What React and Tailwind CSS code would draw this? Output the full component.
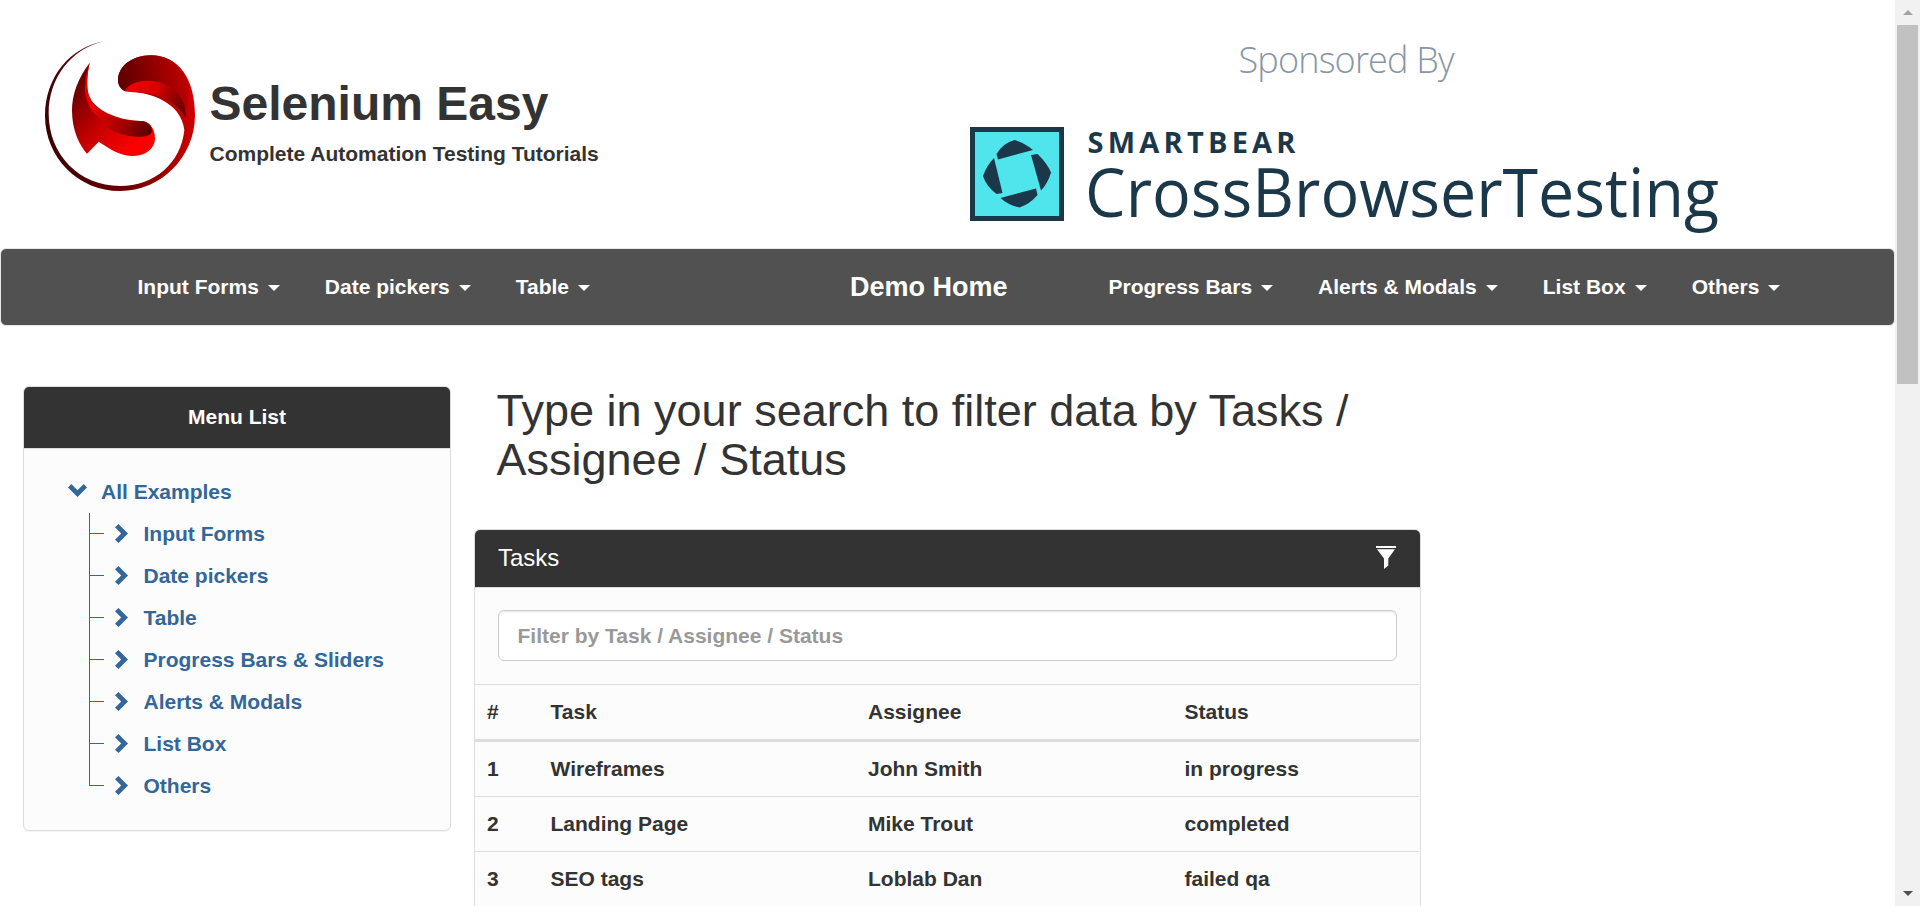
const leftNav = ["Input Forms", "Date pickers", "Table"];
const rightNav = ["Progress Bars", "Alerts & Modals", "List Box", "Others"];
const examples = [
  "Input Forms",
  "Date pickers",
  "Table",
  "Progress Bars & Sliders",
  "Alerts & Modals",
  "List Box",
  "Others",
];
const tasks = [
  ["1", "Wireframes", "John Smith", "in progress"],
  ["2", "Landing Page", "Mike Trout", "completed"],
  ["3", "SEO tags", "Loblab Dan", "failed qa"],
];

function SeleniumLogo() {
  return (
    <svg viewBox="27 33 450 450" className="h-[150px] w-[150px] shrink-0">
      <defs>
        <linearGradient id="ring" gradientUnits="userSpaceOnUse" x1="27" y1="300" x2="477" y2="200">
          <stop offset="0" stopColor="#3a0204" />
          <stop offset="0.45" stopColor="#6d0003" />
          <stop offset="0.75" stopColor="#a80000" />
          <stop offset="1" stopColor="#d60000" />
        </linearGradient>
        <linearGradient id="cap" gradientUnits="userSpaceOnUse" x1="265" y1="150" x2="440" y2="110">
          <stop offset="0" stopColor="#620000" />
          <stop offset="1" stopColor="#bc0000" />
        </linearGradient>
        <linearGradient id="fold" gradientUnits="userSpaceOnUse" x1="290" y1="160" x2="445" y2="240">
          <stop offset="0" stopColor="#ee0000" />
          <stop offset="0.4" stopColor="#d80000" />
          <stop offset="1" stopColor="#640000" />
        </linearGradient>
        <linearGradient id="body" gradientUnits="userSpaceOnUse" x1="110" y1="200" x2="290" y2="350">
          <stop offset="0" stopColor="#700000" />
          <stop offset="0.5" stopColor="#c60000" />
          <stop offset="1" stopColor="#fb0000" />
        </linearGradient>
        <linearGradient id="shade" gradientUnits="userSpaceOnUse" x1="180" y1="240" x2="340" y2="310">
          <stop offset="0" stopColor="#e00000" />
          <stop offset="0.5" stopColor="#a60000" />
          <stop offset="1" stopColor="#580000" />
        </linearGradient>
      </defs>
      <path
        fill="url(#ring)"
        d="M205 34C105 50 27 140 27 257C27 382 127 483 252 483C377 483 477 380 477 255C477 150 430 76 345 76C285 76 246 112 246 150C246 166 255 178 268 184C340 186 435 215 445 300C435 400 355 468 252 468C130 468 38 375 38 250C38 145 105 55 205 34Z"
      />
      <path
        fill="url(#cap)"
        d="M268 184C255 178 246 166 246 150C246 112 285 76 345 76C400 76 440 110 460 165L448 262C430 190 370 150 320 152C290 154 272 168 268 184Z"
      />
      <path fill="url(#fold)" d="M266 183C280 160 312 149 350 153C410 162 452 198 449 266C425 212 355 186 290 187Z" />
      <path
        fill="url(#body)"
        d="M161 98C125 145 108 195 108 242C108 300 130 345 153 371L188 335C220 355 250 378 292 378C335 378 357 350 357 325C357 295 340 273 315 273C240 270 175 240 158 195C150 165 154 130 161 98Z"
      />
      <path fill="#ea0000" d="M161 98C145 145 141 190 158 225C166 243 176 254 190 262C205 272 215 262 212 254C180 237 158 212 154 175C152 145 156 120 161 98Z" />
      <path
        fill="url(#shade)"
        d="M175 228C210 260 250 272 315 273C335 274 349 290 348 303C346 317 325 321 300 320C240 316 185 290 175 228Z"
      />
    </svg>
  );
}

function SponsorLogo() {
  return (
    <svg viewBox="0 0 760 220" className="h-[220px] w-[760px]">
      <text x="268.5" y="54.5" fontFamily="Open Sans, Noto Sans, sans-serif" fontWeight="300" fontSize="36" fill="#8796a6" textLength="216">
        Sponsored By
      </text>
      <rect x="2.5" y="111.5" width="89" height="89" fill="#50e4ec" stroke="#1a384a" strokeWidth="5" />
      <g fill="#1a384a">
        <path d="M26.500 136Q33 125 44.500 122Q55 125 63 132L28 141.500Z" />
        <path d="M61 137L67.500 136Q77 145 81 154.500Q78 165 71 172.500Z" />
        <path d="M66 170.500L67.500 177Q60 186 49.500 189.500Q38 187 30.500 180Z" />
        <path d="M24 140L32.500 175L26.500 176Q16 168 13 158Q17 147 24 140Z" />
      </g>
      <text x="117.500" y="135" fontFamily="Open Sans, Noto Sans, sans-serif" fontWeight="700" fontSize="29" fill="#1a384a" textLength="208">
        SMARTBEAR
      </text>
      <text x="115" y="198.500" fontFamily="Open Sans, Noto Sans, sans-serif" fontWeight="400" fontSize="67" fill="#1a384a" textLength="634" lengthAdjust="spacingAndGlyphs">
        CrossBrowserTesting
      </text>
    </svg>
  );
}

function NavItem({ label }) {
  return (
    <a className="flex items-center px-[22.5px] leading-[30px]">
      {label}
      <span className="ml-[9px] mt-px border-x-6 border-t-6 border-x-transparent border-t-white" />
    </a>
  );
}

function Chevron({ down }) {
  return (
    <svg
      viewBox="0 0 13 19"
      className={down ? "h-[19px] w-[13px] rotate-90" : "h-[19px] w-[13px]"}
      fill="#336699"
    >
      <path d="M3.500 0L13 9.500L3.500 19L0 15.700L6.200 9.500L0 3.300Z" />
    </svg>
  );
}

function Scrollbar() {
  return (
    <div className="flex h-full w-[25px] shrink-0 flex-col items-center justify-between bg-[#f1f1f1]">
      <div className="flex flex-col items-center">
        <div className="flex h-[25px] items-center">
          <span className="border-x-5 border-b-5 border-x-transparent border-b-[#a3a3a3]" />
        </div>
        <div className="h-[359px] w-[21px] bg-[#c1c1c1]" />
      </div>
      <div className="flex h-[25px] items-center">
        <span className="border-x-5 border-t-5 border-x-transparent border-t-[#505050]" />
      </div>
    </div>
  );
}

export default function App() {
  return (
    <div className="flex h-[906px] w-[1920px] overflow-hidden bg-white font-['Liberation_Sans',Arial,sans-serif] text-[21px] font-bold leading-[30px] text-[#333]">
      <div className="flex h-full w-[1895px] flex-col">
        <header className="flex h-[248px] shrink-0">
          <div className="flex w-[970px] pl-[45px] pt-[41px]">
            <SeleniumLogo />
            <div className="pl-[14.5px] pt-[36px]">
              <h1 className="text-[48px] leading-[54px]">Selenium Easy</h1>
              <p className="mt-[8px]">Complete Automation Testing Tutorials</p>
            </div>
          </div>
          <div className="pt-[18px]">
            <SponsorLogo />
          </div>
        </header>

        <nav className="flex h-[78px] shrink-0 rounded-[6px] border border-[#e7e7e7] bg-[#515151] text-white">
          <div className="flex w-[827px] pl-[114px]">
            {leftNav.map((label) => (
              <NavItem key={label} label={label} />
            ))}
          </div>
          <a className="flex w-[258px] items-center pl-[22px] text-[27px]">Demo Home</a>
          <div className="flex">
            {rightNav.map((label) => (
              <NavItem key={label} label={label} />
            ))}
          </div>
        </nav>

        <main className="flex min-h-0 flex-1 pl-[23px]">
          <aside className="mt-[60px] h-[445px] w-[428px] shrink-0 overflow-hidden rounded-[6px] border border-[#ddd] bg-[#fcfcfc] shadow-[0_1px_1px_rgba(0,0,0,0.05)]">
            <div className="flex h-[62px] items-center justify-center border-b border-[#ddd] bg-[#333] pb-px text-white">
              Menu List
            </div>
            <div className="pt-[22px] text-[#336699]">
              <div className="flex h-[42px] items-center">
                <span className="-mt-[4px] ml-[47px] mr-[17px]">
                  <Chevron down />
                </span>
                All Examples
              </div>
              <ul className="ml-[65px]">
                {examples.map((name, i) => (
                  <li key={name} className="flex h-[42px]">
                    <span
                      className={
                        i === examples.length - 1
                          ? "h-[21px] w-[15px] border-b border-l border-[#336699]"
                          : "h-[42px] w-px bg-[#336699]"
                      }
                    />
                    {i < examples.length - 1 && <span className="mt-[20px] h-px w-[14px] bg-[#336699]" />}
                    <span className="ml-[11px] mr-[15.5px] mt-[11px]">
                      <Chevron />
                    </span>
                    <span className="leading-[42px]">{name}</span>
                  </li>
                ))}
              </ul>
            </div>
          </aside>

          <section className="ml-[23px] w-[947px]">
            <h2 className="mt-[60px] h-[143px] pl-[22.5px] pr-[45px] text-[45px] font-normal leading-[49px]">
              Type in your search to filter data by Tasks / Assignee / Status
            </h2>
            <div className="h-[500px] overflow-hidden rounded-t-[6px] border border-[#ddd] bg-[#fcfcfc]">
              <div className="flex h-[58px] items-center justify-between border-b border-[#ddd] bg-[#333] pb-[2px] pl-[23px] pr-[24px] text-[24px] font-normal text-white">
                <span>Tasks</span>
                <svg viewBox="0 0 20 23" className="mb-px h-[23px] w-[20px]" fill="#fff">
                  <path d="M0 0H20V2H0ZM1 3.300H19L12.300 12.500V19.500L8 23V12.500Z" />
                </svg>
              </div>
              <div className="px-[23px] pb-[23px] pt-[22px]">
                <input
                  className="block h-[51px] w-full rounded-[6px] border border-[#ccc] bg-white px-[18.5px] shadow-[inset_0_1.5px_1.5px_rgba(0,0,0,0.075)] placeholder:text-[#999] placeholder:opacity-100"
                  placeholder="Filter by Task / Assignee / Status"
                />
              </div>
              <div className="w-[944px]">
                <div className="grid h-[58px] grid-cols-[63.5px_317.5px_316.5px_1fr] items-center border-b-3 border-t border-[#ddd] pl-[12px]">
                  <span>#</span>
                  <span>Task</span>
                  <span>Assignee</span>
                  <span>Status</span>
                </div>
                {tasks.map((row) => (
                  <div
                    key={row[0]}
                    className="grid h-[55px] grid-cols-[63.5px_317.5px_316.5px_1fr] items-center border-b border-[#ddd] pl-[12px]"
                  >
                    {row.map((cell) => (
                      <span key={cell}>{cell}</span>
                    ))}
                  </div>
                ))}
              </div>
            </div>
          </section>
        </main>
      </div>
      <Scrollbar />
    </div>
  );
}
